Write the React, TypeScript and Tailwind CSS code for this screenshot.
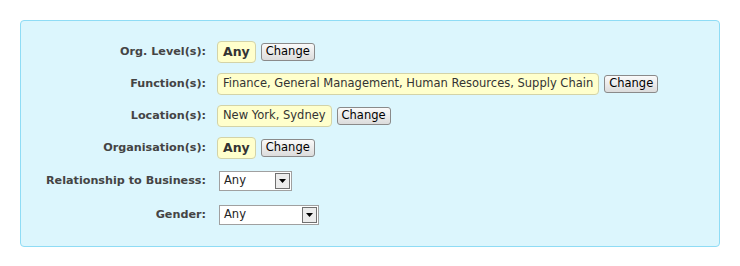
import { ReactNode } from "react";

function Row({ label, children, className = "" }: { label: string; children: ReactNode; className?: string }) {
  return (
    <div className={`flex items-center ${className}`}>
      <div className="w-[196px] shrink-0 pr-[11px] text-right text-[11.2px] font-bold leading-none text-[#444]">
        {label}
      </div>
      <div className="flex items-center">{children}</div>
    </div>
  );
}

function Chosen({ children, bold = false }: { children: ReactNode; bold?: boolean }) {
  return (
    <span
      className={`flex h-[22px] items-center rounded-[4px] border border-[#d3d3a8] bg-[#ffffcc] px-[5px] text-[#333] ${
        bold ? "text-[12.5px] font-bold" : "text-[11.5px]"
      }`}
    >
      {children}
    </span>
  );
}

function ChangeButton() {
  return (
    <button className="ml-[5px] flex h-[18px] items-center rounded-[3px] border border-[#8a8a8a] bg-gradient-to-b from-[#fafafa] to-[#dcdcdc] px-[4px] text-[11.5px] text-black">
      Change
    </button>
  );
}

function Select({ width }: { width: string }) {
  return (
    <div className={`ml-[2px] flex h-[20px] items-stretch border border-[#a0a0a0] bg-white ${width}`}>
      <span className="flex flex-1 items-center pl-[4px] text-[11.5px] text-[#222]">Any</span>
      <span className="m-[1px] flex w-[15px] items-center justify-center border border-[#707070] bg-[#ececec]">
        <svg width="7" height="4" viewBox="0 0 7 4">
          <path d="M0 0h7L3.5 4z" fill="#000" />
        </svg>
      </span>
    </div>
  );
}

export default function App() {
  return (
    <div className="bg-white p-[20px] font-['DejaVu_Sans',sans-serif]">
      <div className="flex w-[700px] flex-col rounded-[4px] border border-[#8fdcf5] bg-[#dcf6fd] pb-[21px] pt-[20px]">
        <Row label="Org. Level(s):">
          <Chosen bold>Any</Chosen>
          <ChangeButton />
        </Row>
        <Row label="Function(s):" className="mt-[10px]">
          <Chosen>Finance, General Management, Human Resources, Supply Chain</Chosen>
          <ChangeButton />
        </Row>
        <Row label="Location(s):" className="mt-[10px]">
          <Chosen>New York, Sydney</Chosen>
          <ChangeButton />
        </Row>
        <Row label="Organisation(s):" className="mt-[10px]">
          <Chosen bold>Any</Chosen>
          <ChangeButton />
        </Row>
        <Row label="Relationship to Business:" className="mt-[12px]">
          <Select width="w-[73px]" />
        </Row>
        <Row label="Gender:" className="mt-[14px]">
          <Select width="w-[100px]" />
        </Row>
      </div>
    </div>
  );
}
